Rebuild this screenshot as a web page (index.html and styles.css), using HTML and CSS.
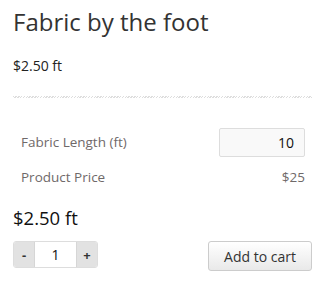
FILE: index.html
```html
<!DOCTYPE html>
<html lang="en">
<head>
    <meta charset="UTF-8">
    <meta name="viewport" content="width=device-width, initial-scale=1.0">
    <title>Fabric by the foot</title>
    <link rel="stylesheet" href="styles.css">
</head>
<body>

<div class="product">
    <h1 class="product-title">Fabric by the foot</h1>
    <p class="unit-price">$2.50 ft</p>
    <hr class="divider">

    <div class="options">
        <div class="option-row">
            <label for="fabric-length">Fabric Length (ft)</label>
            <input type="text" id="fabric-length" class="length-input" value="10">
        </div>
        <div class="option-row">
            <span>Product Price</span>
            <span class="option-value">$25</span>
        </div>
    </div>

    <p class="price">$2.50 ft</p>

    <div class="cart-row">
        <div class="qty">
            <button class="qty-btn">-</button>
            <input type="text" class="qty-input" value="1">
            <button class="qty-btn">+</button>
        </div>
        <button class="add-to-cart">Add to cart</button>
    </div>
</div>

</body>
</html>
```

FILE: styles.css
```css
body {
    margin: 0;
    font-family: "Open Sans", "DejaVu Sans", sans-serif;
    color: #222;
    background-color: #fff;
}
.product {
    width: 299px;
    padding: 4px 20px 0 13px;
}
.product-title {
    margin: 0;
    font-size: 24px;
    font-weight: 400;
    line-height: 36px;
    color: #333;
}
.unit-price {
    margin: 16px 0 0;
    font-size: 14px;
    line-height: 20px;
}
.divider {
    height: 2px;
    margin: 20px 0 0;
    border: none;
    background: repeating-linear-gradient(135deg, #ddd 0, #ddd 1px, #fff 1px, #fff 2px);
}
.options {
    padding: 30px 7px 0 8px;
}
.option-row {
    display: flex;
    justify-content: space-between;
    align-items: center;
    font-size: 13.5px;
    color: #6f6969;
    margin-bottom: 6px;
}
.option-row label,
.option-row span {
    line-height: 29px;
}
.length-input {
    width: 86px;
    height: 29px;
    box-sizing: border-box;
    padding: 0 10px;
    border: 1px solid #ddd;
    border-radius: 2px;
    background-color: #f9f9f9;
    font-family: inherit;
    font-size: 14px;
    color: #111;
    text-align: right;
}
.option-value {
    color: #6f6969;
}
.price {
    margin: 13px 0 0;
    font-size: 18.5px;
    line-height: 26px;
    color: #111;
}
.cart-row {
    display: flex;
    justify-content: space-between;
    align-items: flex-start;
    margin-top: 10px;
}
.qty {
    display: flex;
    height: 25px;
    border: 1px solid #ddd;
    border-radius: 3px;
    overflow: hidden;
}
.qty-btn {
    width: 20px;
    padding: 0;
    border: none;
    background-color: #e2e2e2;
    font-family: inherit;
    font-size: 13px;
    font-weight: 700;
    color: #333;
}
.qty-input {
    width: 43px;
    padding: 0;
    border: none;
    border-left: 1px solid #d6d6d6;
    border-right: 1px solid #d6d6d6;
    box-sizing: border-box;
    font-family: inherit;
    font-size: 14px;
    text-align: center;
    color: #111;
}
.add-to-cart {
    width: 104px;
    height: 30px;
    border: 1px solid #ccc;
    border-radius: 3px;
    background: linear-gradient(#fff, #e9e9e9);
    font-family: inherit;
    font-size: 14px;
    color: #333;
    cursor: pointer;
}
```
